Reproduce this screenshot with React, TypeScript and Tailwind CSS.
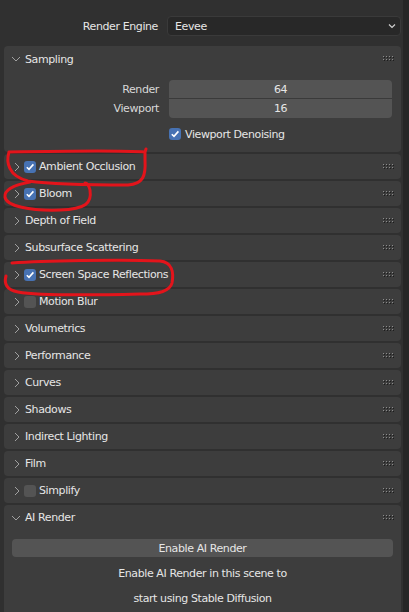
import React from 'react';

const font = { fontFamily: '"DejaVu Sans", Verdana, sans-serif' };

function Grip() {
  const dots = [];
  for (let r = 0; r < 2; r++) {
    for (let c = 0; c < 4; c++) {
      dots.push(
        <g key={`${r}-${c}`}>
          <rect x={c * 3 + 1} y={r * 3 + 1} width="1" height="1" fill="#1c1c1c" />
          <rect x={c * 3} y={r * 3} width="1" height="1" fill="#8c8c8c" />
        </g>
      );
    }
  }
  return (
    <svg width="12" height="6" className="shrink-0">
      {dots}
    </svg>
  );
}

function ChevronRight() {
  return (
    <svg width="8" height="10" viewBox="0 0 8 10" className="shrink-0">
      <path d="M2 1 L6 5 L2 9" fill="none" stroke="#a0a0a0" strokeWidth="1" />
    </svg>
  );
}

function ChevronDown() {
  return (
    <svg width="10" height="8" viewBox="0 0 10 8" className="shrink-0">
      <path d="M1 2 L5 6 L9 2" fill="none" stroke="#a0a0a0" strokeWidth="1" />
    </svg>
  );
}

function Check({ on }: { on: boolean }) {
  return (
    <div
      className={`w-[12px] h-[12px] rounded-[3px] flex items-center justify-center shrink-0 ${
        on ? 'bg-[#4772b3]' : 'bg-[#545454]'
      }`}
    >
      {on && (
        <svg width="10" height="10" viewBox="0 0 10 10">
          <path d="M1.8 5.2 L4 7.4 L8.4 2.4" fill="none" stroke="#ffffff" strokeWidth="1.6" />
        </svg>
      )}
    </div>
  );
}

function Row({ label, check }: { label: string; check?: boolean }) {
  return (
    <div className="h-[25px] rounded-[4px] bg-[#3d3d3d] flex items-center pl-[9px] pr-[6px]">
      <ChevronRight />
      {check !== undefined ? (
        <div className="flex items-center ml-[3px] gap-[3px]">
          <Check on={check} />
          <span className="text-[#e6e6e6]">{label}</span>
        </div>
      ) : (
        <span className="ml-[4px] text-[#e6e6e6]">{label}</span>
      )}
      <div className="flex-1" />
      <Grip />
    </div>
  );
}

const rows: { label: string; check?: boolean }[] = [
  { label: 'Ambient Occlusion', check: true },
  { label: 'Bloom', check: true },
  { label: 'Depth of Field' },
  { label: 'Subsurface Scattering' },
  { label: 'Screen Space Reflections', check: true },
  { label: 'Motion Blur', check: false },
  { label: 'Volumetrics' },
  { label: 'Performance' },
  { label: 'Curves' },
  { label: 'Shadows' },
  { label: 'Indirect Lighting' },
  { label: 'Film' },
  { label: 'Simplify', check: false },
];

export default function App() {
  return (
    <div
      className="w-[409px] h-[612px] bg-[#303030] relative overflow-hidden flex text-[11px] leading-none tracking-[-0.4px]"
      style={font}
    >
      <div className="flex-1 flex flex-col pl-[4px] pr-[2px]">
        {/* Render engine */}
        <div className="flex items-center h-[20px] mt-[16px]">
          <div className="w-[154px] text-right text-[#e6e6e6]">Render Engine</div>
          <div className="ml-[9px] flex-1 h-[20px] rounded-[4px] bg-[#282828] border border-[#3a3a3a] flex items-center pl-[7px] pr-[4px] text-[#e6e6e6]">
            <span>Eevee</span>
            <div className="flex-1" />
            <svg width="8" height="6" viewBox="0 0 8 6">
              <path d="M1 1.5 L4 4.5 L7 1.5" fill="none" stroke="#d0d0d0" strokeWidth="1.2" />
            </svg>
          </div>
        </div>

        {/* Sampling */}
        <div className="mt-[10px] rounded-[4px] bg-[#3d3d3d] pb-[12px]">
          <div className="h-[26px] flex items-center pl-[7px] pr-[6px]">
            <ChevronDown />
            <span className="ml-[4px] text-[#e6e6e6]">Sampling</span>
            <div className="flex-1" />
            <Grip />
          </div>
          <div className="flex mt-[8px]">
            <div className="w-[155px] flex flex-col text-right text-[#d8d8d8]">
              <div className="h-[19px] flex items-center justify-end">Render</div>
              <div className="h-[19px] flex items-center justify-end">Viewport</div>
            </div>
            <div className="ml-[10px] w-[223px] flex flex-col rounded-[4px] overflow-hidden text-[#e6e6e6]">
              <div className="h-[18px] bg-[#545454] flex items-center justify-center">64</div>
              <div className="h-[1px] bg-[#3a3a3a]" />
              <div className="h-[19px] bg-[#545454] flex items-center justify-center">16</div>
            </div>
          </div>
          <div className="flex items-center mt-[10px] pl-[165px] gap-[4px] h-[12px]">
            <Check on={true} />
            <span className="text-[#e6e6e6]">Viewport Denoising</span>
          </div>
        </div>

        {/* Collapsed panels */}
        <div className="flex flex-col gap-[2px] mt-[2px]">
          {rows.map((r) => (
            <Row key={r.label} label={r.label} check={r.check} />
          ))}
        </div>

        {/* AI Render */}
        <div className="mt-[2px] flex-1 rounded-t-[4px] bg-[#3d3d3d]">
          <div className="h-[25px] flex items-center pl-[7px] pr-[6px]">
            <ChevronDown />
            <span className="ml-[4px] text-[#e6e6e6]">AI Render</span>
            <div className="flex-1" />
            <Grip />
          </div>
          <div className="px-[8px] mt-[9px]">
            <div className="h-[18px] rounded-[4px] bg-[#545454] flex items-center justify-center text-[#e6e6e6]">
              Enable AI Render
            </div>
          </div>
          <div className="text-center text-[#e6e6e6] mt-[11px] h-[12px]">Enable AI Render in this scene to</div>
          <div className="text-center text-[#e6e6e6] mt-[13px]">start using Stable Diffusion</div>
        </div>
      </div>
      <div className="w-[6px] bg-[#262626]" />

      {/* red pen annotations */}
      <svg
        className="absolute inset-0 pointer-events-none"
        width="409"
        height="612"
        viewBox="0 0 409 612"
      >
        <g fill="none" stroke="#e3141b" strokeWidth="3" strokeLinecap="round" strokeLinejoin="round">
          <path d="M9 152 C 6 162, 8 176, 28 181 C 50 184, 90 185, 128 185 C 143 184, 146 176, 145 160 L 145 152 C 120 150, 60 151, 9 152 M 145 152 L 146 149" />
          <path d="M30 182 C 14 185, 4 190, 5 197 C 6 206, 30 211, 60 210 C 86 209, 92 203, 90 190 C 89 186, 87 183, 85 183" />
          <path d="M12 263 C 40 261, 120 259, 160 261 C 172 262, 174 272, 172 283 C 170 291, 160 294, 140 294 C 100 295, 40 296, 18 292 C 6 290, 4 283, 6 276" />
        </g>
      </svg>
    </div>
  );
}
